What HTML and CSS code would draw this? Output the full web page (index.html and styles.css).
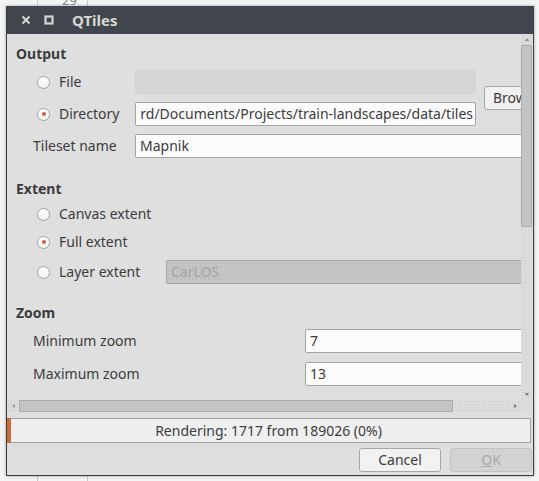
FILE: index.html
```html
<!DOCTYPE html>
<html>
<head>
<meta charset="utf-8">
<title>QTiles</title>
<link rel="stylesheet" href="styles.css">
</head>
<body>
<div class="desktop">
  <span class="bg-num">29</span>
  <div class="window">
    <div class="titlebar">
      <svg class="tb-icon" width="10" height="10" viewBox="0 0 10 10"><path d="M1.5 1.5 L8.5 8.5 M8.5 1.5 L1.5 8.5" stroke="#d4d4d4" stroke-width="2" fill="none"/></svg>
      <svg class="tb-icon tb-max" width="10" height="10" viewBox="0 0 10 10"><rect x="1.5" y="1.5" width="7" height="7" stroke="#d4d4d4" stroke-width="2.2" fill="none"/></svg>
      <span class="title">QTiles</span>
    </div>
    <div class="body">
      <div class="scrollarea">
        <div class="viewport">
          <div class="content">
            <div class="heading">Output</div>
            <div class="output-grid">
              <label class="radio-row"><span class="radio"></span>File</label>
              <div class="field disabled"></div>
              <div class="browse">Browse...</div>
              <label class="radio-row"><span class="radio checked"></span>Directory</label>
              <div class="field path"><span>rd/Documents/Projects/train-landscapes/data/tiles</span></div>
              <div class="plain-label">Tileset name</div>
              <div class="field wide">Mapnik</div>
            </div>

            <div class="heading extent-heading">Extent</div>
            <div class="extent-grid">
              <label class="radio-row"><span class="radio"></span>Canvas extent</label>
              <label class="radio-row"><span class="radio checked"></span>Full extent</label>
              <div class="layer-row">
                <label class="radio-row"><span class="radio"></span>Layer extent</label>
                <div class="combo">CarLOS</div>
              </div>
            </div>

            <div class="heading zoom-heading">Zoom</div>
            <div class="zoom-grid">
              <div class="plain-label">Minimum zoom</div>
              <div class="field">7</div>
              <div class="plain-label">Maximum zoom</div>
              <div class="field">13</div>
            </div>
          </div>
        </div>
        <div class="vscroll">
          <span class="arrow up"></span>
          <div class="vtrack"><div class="vthumb"></div></div>
          <span class="arrow down"></span>
        </div>
        <div class="hscroll">
          <span class="arrow left"></span>
          <div class="htrack"><div class="hthumb"></div></div>
          <span class="arrow right"></span>
        </div>
        <div class="corner"></div>
      </div>
      <div class="progress">
        <div class="chunk"></div>
        <span class="ptext">Rendering: 1717 from 189026 (0%)</span>
      </div>
      <div class="buttons">
        <div class="btn">Cancel</div>
        <div class="btn disabled-btn"><u>O</u>K</div>
      </div>
    </div>
  </div>
</div>
</body>
</html>
```
FILE: styles.css
```css
* { box-sizing: border-box; }
html, body { margin: 0; padding: 0; }
body {
  font-family: "Noto Sans", "DejaVu Sans", sans-serif;
  font-size: 14px;
  color: #3c3c3c;
  background: #f2f2f2;
}
.desktop {
  position: relative;
  width: 539px;
  height: 481px;
  overflow: hidden;
  padding: 6px 0 0 6px;
  background-color: #f4f4f4;
  background-image:
    linear-gradient(#c9c9c9, #c9c9c9),
    linear-gradient(#c9c9c9, #c9c9c9);
  background-size: 1px 100%, 1px 100%;
  background-position: 37px 0, 87px 0;
  background-repeat: no-repeat;
}
.bg-num {
  position: absolute;
  left: 62px;
  top: -9px;
  font-size: 13px;
  color: #8a8a8a;
}
.window {
  position: relative;
  width: 528px;
  height: 470px;
  background: #dfdfdf;
  border: 1px solid #383b40;
  border-top: 0;
  box-shadow: 0 0 3px rgba(0,0,0,0.35);
  display: flex;
  flex-direction: column;
}
.titlebar {
  height: 28px;
  flex: none;
  background: #41464e;
  display: flex;
  align-items: center;
  padding-left: 14px;
}
.tb-icon { display: block; }
.tb-max { margin-left: 13px; }
.title {
  margin-left: 18px;
  font-weight: bold;
  font-size: 15px;
  color: #dad8d3;
  line-height: 18px;
}
.body {
  flex: 1;
  display: flex;
  flex-direction: column;
}
.scrollarea {
  height: 378px;
  display: grid;
  grid-template-columns: 514px 11px;
  grid-template-rows: 366px 12px;
}
.viewport {
  overflow: hidden;
  position: relative;
}
.content {
  width: 583px;
  padding: 11px 0 0 9px;
}
.heading {
  font-weight: bold;
  line-height: 18px;
  height: 18px;
}
.output-grid {
  margin-top: 7px;
  display: grid;
  grid-template-columns: 119px 341px 104px;
  grid-template-rows: 24px 24px 24px;
  row-gap: 8px;
  align-items: center;
}
.radio-row {
  display: flex;
  align-items: center;
  padding-left: 21px;
  line-height: 18px;
  white-space: nowrap;
}
.radio {
  width: 13px;
  height: 13px;
  border-radius: 50%;
  border: 1px solid #a2a2a2;
  background: linear-gradient(#ffffff, #f1f1f1);
  margin-right: 9px;
  position: relative;
  flex: none;
}
.radio.checked::after {
  content: "";
  position: absolute;
  left: 3.5px;
  top: 3.5px;
  width: 4px;
  height: 4px;
  border-radius: 50%;
  background: #c8643a;
}
.plain-label {
  padding-left: 17px;
  line-height: 18px;
  white-space: nowrap;
}
.field {
  height: 24px;
  border: 1px solid #a4a4a4;
  border-radius: 2px;
  background: #fbfbfb;
  padding: 0 4px;
  line-height: 22px;
  white-space: nowrap;
  overflow: hidden;
}
.field.disabled {
  background: #d6d6d6;
  border-color: #d1d1d1;
  border-radius: 3px;
}
.field.path {
  display: flex;
  justify-content: flex-end;
  padding: 0 2px 0 0;
}
.field.path span { flex: none; }
.field.wide { grid-column: 2 / 4; }
.browse {
  grid-column: 3;
  grid-row: 1 / 3;
  align-self: center;
  height: 24px;
  margin-left: 8px;
  border: 1px solid #a8a8a8;
  border-radius: 3px;
  background: #f1f1f1;
  line-height: 22px;
  padding-left: 8px;
  white-space: nowrap;
}
.extent-heading { margin-top: 22px; }
.extent-grid {
  margin-top: 4px;
  display: flex;
  flex-direction: column;
  gap: 4px;
}
.extent-grid > .radio-row { height: 24px; }
.extent-grid > .radio-row + .radio-row { margin-bottom: 2px; }
.layer-row {
  display: grid;
  grid-template-columns: 150px 1fr;
  align-items: center;
  height: 24px;
}
.combo {
  height: 24px;
  border: 1px solid #a6a6a6;
  border-radius: 2px;
  background-color: #c4c6c4;
  background-image: radial-gradient(circle, #b8bab8 0.6px, transparent 0.8px);
  background-size: 4px 4px;
  color: #a3a5a3;
  line-height: 22px;
  padding-left: 4px;
}
.zoom-heading { margin-top: 20px; }
.zoom-grid {
  margin-top: 7px;
  display: grid;
  grid-template-columns: 289px 1fr;
  grid-template-rows: 24px 24px;
  row-gap: 9px;
  align-items: center;
}
.vscroll {
  grid-column: 2;
  grid-row: 1;
  display: flex;
  flex-direction: column;
  background-color: #dcdcdc;
  background-image: radial-gradient(circle, #cdcdcd 0.6px, transparent 0.8px);
  background-size: 3px 3px;
}
.vtrack {
  flex: 1;
}
.vthumb {
  height: 182px;
  background: #c4c4c4;
  border: 1px solid #aaaaaa;
  border-radius: 1px;
}
.arrow {
  flex: none;
  width: 11px;
  height: 11px;
  display: flex;
  align-items: center;
  justify-content: center;
  position: relative;
}
.arrow::after {
  content: "";
  width: 0;
  height: 0;
  border: 2.5px solid transparent;
}
.arrow.up::after { border-bottom: 3px solid #8e8e8e; border-top: 0; }
.arrow.down::after { border-top: 3px solid #7a7a7a; border-bottom: 0; }
.arrow.left::after { border-right: 3px solid #9a9a9a; border-left: 0; }
.arrow.right::after { border-left: 3px solid #7a7a7a; border-right: 0; }
.hscroll {
  grid-column: 1;
  grid-row: 2;
  display: flex;
  align-items: stretch;
  padding-left: 1px;
  background-color: #dcdcdc;
  background-image: radial-gradient(circle, #cdcdcd 0.6px, transparent 0.8px);
  background-size: 3px 3px;
}
.hscroll .arrow { height: 12px; }
.htrack { flex: 1; display: flex; }
.hthumb {
  width: 434px;
  height: 12px;
  background: #c4c4c4;
  border: 1px solid #a9a9a9;
  border-radius: 1px;
}
.corner {
  grid-column: 2;
  grid-row: 2;
  background: #dcdcdc;
}
.progress {
  margin-top: 6px;
  width: 524px;
  height: 25px;
  border: 1px solid #a2a2a2;
  border-left: 0;
  background: #efefef;
  display: flex;
  align-items: center;
  position: relative;
}
.chunk {
  width: 4px;
  height: 25px;
  margin-top: -1px;
  margin-bottom: -1px;
  background: #cf6c3c;
  flex: none;
}
.ptext {
  flex: 1;
  text-align: center;
  line-height: 18px;
  margin-right: 4px;
}
.buttons {
  margin-top: 5px;
  display: flex;
  justify-content: flex-end;
  gap: 9px;
  padding-right: 1px;
}
.btn {
  width: 82px;
  height: 24px;
  border: 1px solid #a6a6a6;
  border-radius: 3px;
  background: #f2f2f2;
  text-align: center;
  line-height: 22px;
}
.btn.disabled-btn {
  background-color: #d4d4d4;
  background-image: radial-gradient(circle, #c8c8c8 0.6px, transparent 0.8px);
  background-size: 4px 4px;
  border-color: #c2c2c2;
  color: #a9a9a9;
}
.btn u { text-decoration-color: #a9a9a9; }
```
